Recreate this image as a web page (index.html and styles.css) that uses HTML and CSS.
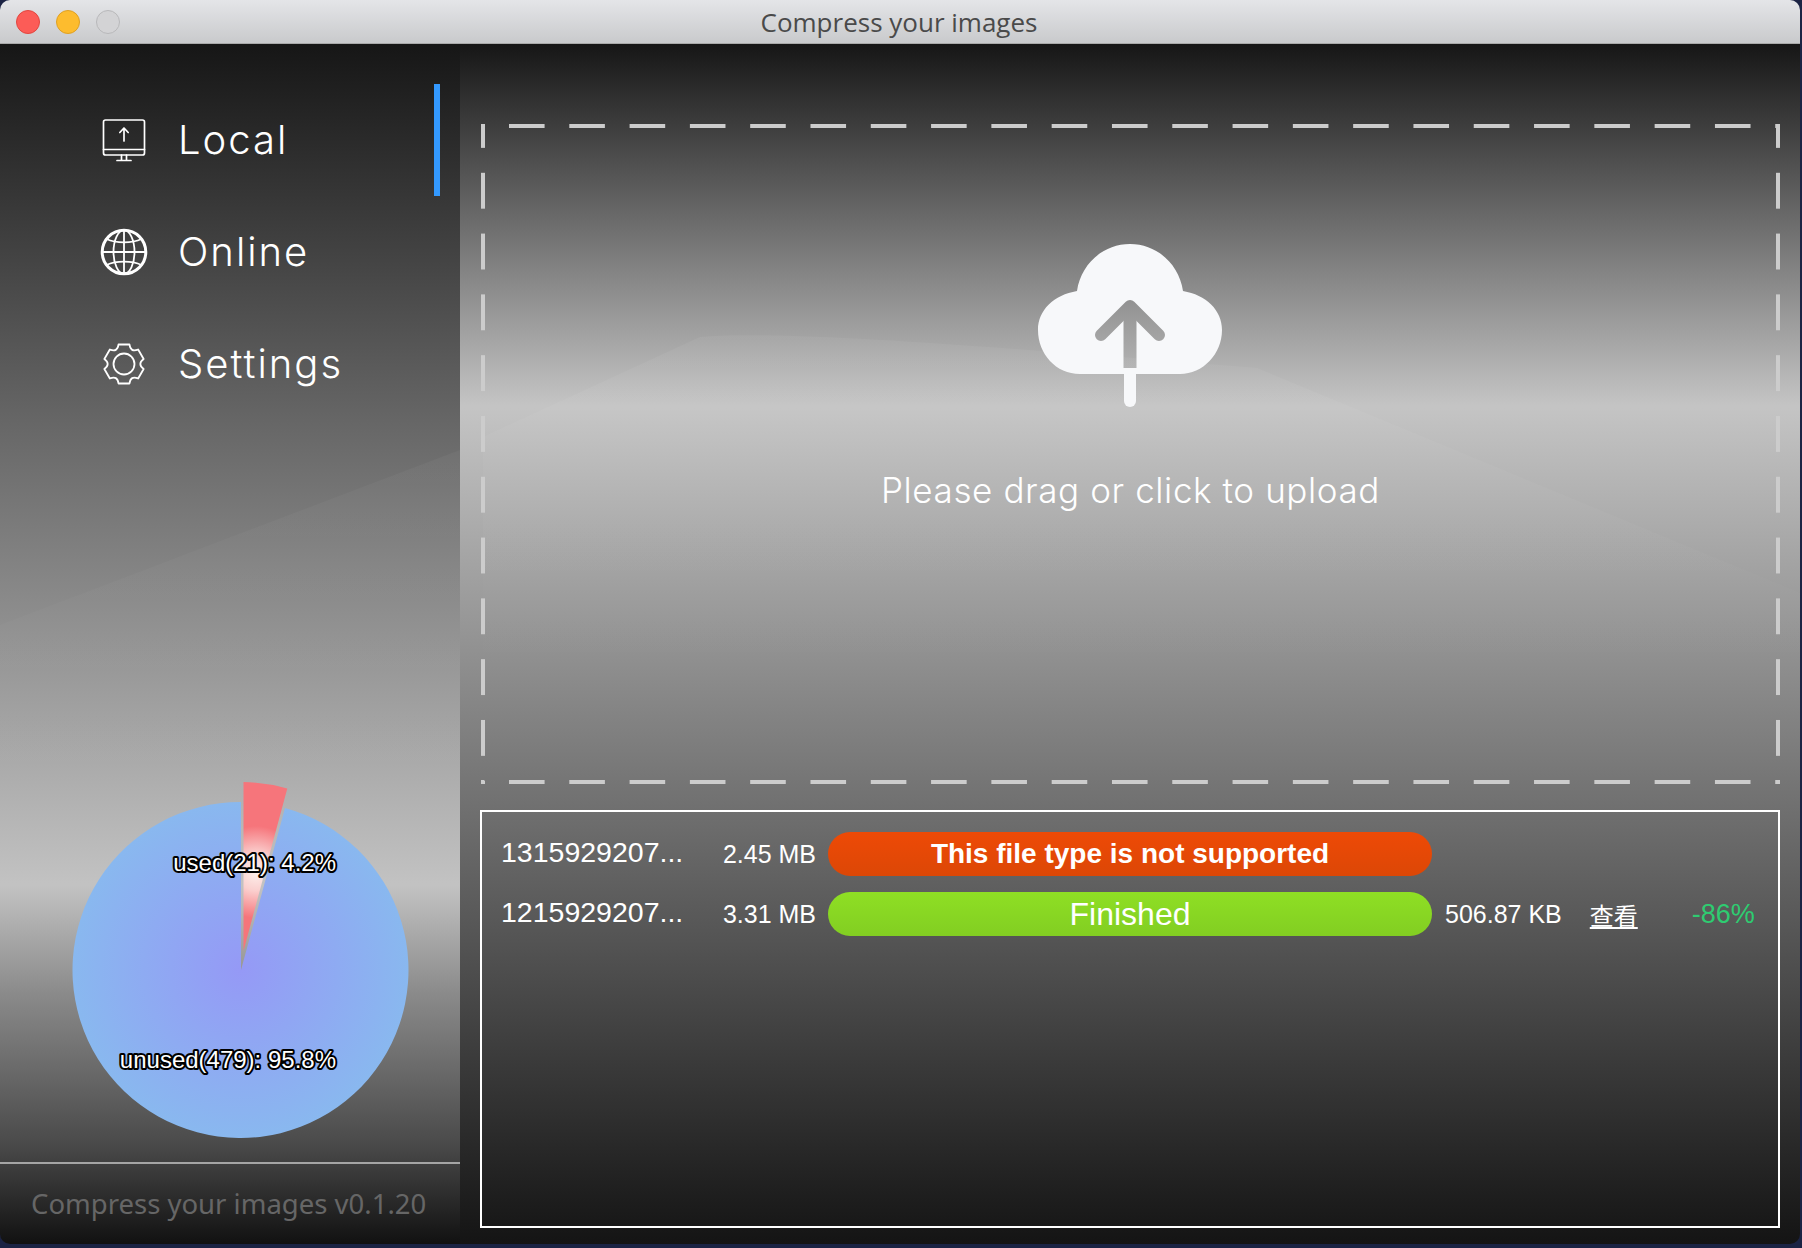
FILE: index.html
```html
<!DOCTYPE html>
<html lang="en">
<head>
    <meta charset="UTF-8">
    <title>Compress your images</title>
    <link rel="stylesheet" href="styles.css">
</head>
<body>
    <div class="window">
        <div class="titlebar">
            <div class="lights">
                <span class="light red"></span>
                <span class="light yellow"></span>
                <span class="light grey"></span>
            </div>
            <div class="title">Compress your images</div>
        </div>
        <div class="content">
            <div class="sidebar">
                <svg class="hills" viewBox="0 0 460 1200" preserveAspectRatio="none">
                    <defs>
                        <linearGradient id="hillside" x1="0" y1="0" x2="0" y2="1">
                            <stop offset="0" stop-color="#fff" stop-opacity="0.035"/>
                            <stop offset="1" stop-color="#fff" stop-opacity="0"/>
                        </linearGradient>
                    </defs>
                    <polygon points="0,581 460,406 460,780 0,780" fill="url(#hillside)"/>
                </svg>
                <ul class="nav">
                    <li class="nav-item active">
                        <svg class="nav-icon" viewBox="0 0 48 48">
                            <g fill="none" stroke="#fff" stroke-width="1.7" stroke-linecap="round" stroke-linejoin="round">
                                <rect x="3.5" y="4" width="41" height="35" rx="2"/>
                                <path d="M3.5 33.500H44.500M21.500 39V44.500M26.500 39V44.500M17 44.500H31"/>
                                <path d="M24 25V12M19.800 16.500L24 12L28.200 16.500"/>
                            </g>
                        </svg>
                        <span>Local</span>
                    </li>
                    <li class="nav-item">
                        <svg class="nav-icon" viewBox="0 0 48 48">
                            <g fill="none" stroke="#fff" stroke-linecap="round">
                                <circle cx="24" cy="24" r="21.800" stroke-width="3"/>
                                <g stroke-width="1.800">
                                    <ellipse cx="24" cy="24" rx="10.500" ry="21.800"/>
                                    <path d="M24 2.200V45.800M2.200 24H45.800"/>
                                    <path d="M6.500 11C16 15.500 32 15.500 41.500 11M6.500 37C16 32.500 32 32.500 41.500 37"/>
                                </g>
                            </g>
                        </svg>
                        <span>Online</span>
                    </li>
                    <li class="nav-item">
                        <svg class="nav-icon" viewBox="-24 -24 48 48">
                            <g fill="none" stroke="#fff" stroke-width="1.800" stroke-linejoin="round">
                                <path d="M-5.500 -19.500L5.500 -19.500Q6.500 -11.300 14.140 -14.510L19.640 -4.990Q13 0 19.640 4.990L14.140 14.510Q6.500 11.300 5.500 19.500L-5.500 19.500Q-6.500 11.300 -14.140 14.510L-19.640 4.990Q-13 0 -19.640 -4.990L-14.140 -14.510Q-6.500 -11.300 -5.500 -19.500Z"/>
                                <circle cx="0" cy="0" r="10.500"/>
                            </g>
                        </svg>
                        <span>Settings</span>
                    </li>
                </ul>
                <div class="pie-wrap">
                    <svg class="pie" viewBox="-1 -8 460 390">
                        <defs>
                            <radialGradient id="pieblue" gradientUnits="userSpaceOnUse" cx="240" cy="190" r="168">
                                <stop offset="0" stop-color="#9599f6"/>
                                <stop offset="1" stop-color="#89b8ef"/>
                            </radialGradient>
                            <radialGradient id="piered" gradientUnits="userSpaceOnUse" cx="255" cy="92" r="46">
                                <stop offset="0" stop-color="#fdf0ec"/>
                                <stop offset="0.4" stop-color="#fad0cf"/>
                                <stop offset="1" stop-color="#f6757b"/>
                            </radialGradient>
                        </defs>
                        <path d="M240 190L284 28A168 168 0 1 1 240 22Z" fill="url(#pieblue)"/>
                        <path d="M242.500 171L242.500 2A168 168 0 0 1 286.300 8.500Z" fill="url(#piered)"/>
                        <text class="pie-label" x="335" y="91" text-anchor="end">used(21): 4.2%</text>
                        <text class="pie-label" x="335" y="288" text-anchor="end">unused(479): 95.8%</text>
                    </svg>
                </div>
                <div class="version">Compress your images v0.1.20</div>
            </div>
            <div class="main">
                <svg class="hills" viewBox="0 0 1340 1200" preserveAspectRatio="none">
                    <defs>
                        <linearGradient id="hillmain" x1="0" y1="0" x2="0" y2="1">
                            <stop offset="0" stop-color="#fff" stop-opacity="0.05"/>
                            <stop offset="1" stop-color="#fff" stop-opacity="0"/>
                        </linearGradient>
                    </defs>
                    <path d="M23 393L240 293C320 285 560 305 797 324L1340 549L1340 640L23 640Z" fill="url(#hillmain)"/>
                </svg>
                <div class="dropzone">
                    <svg class="cloud" viewBox="0 0 185 163">
                        <defs>
                            <mask id="arrowcut">
                                <rect width="185" height="163" fill="#fff"/>
                                <path d="M63 91L92 62L121 91" fill="none" stroke="#000" stroke-width="12" stroke-linecap="round" stroke-linejoin="round"/>
                                <rect x="85.500" y="62" width="13" height="62" fill="#000"/>
                            </mask>
                        </defs>
                        <path d="M39 47C43 20 65 0 92 0C119 0 141 20 145 47C168 51 184 66 184 86C184 110 165 130 142 130L42 130C18 130 0 110 0 86C0 66 16 51 39 47Z" fill="#f7f8fa" mask="url(#arrowcut)"/>
                        <path d="M86 124H98V157A6 6 0 0 1 86 157Z" fill="#f7f8fa"/>
                    </svg>
                    <div class="drop-text">Please drag or click to upload</div>
                </div>
                <div class="filelist">
                    <div class="file-row">
                        <div class="file-name">1315929207...</div>
                        <div class="file-size">2.45 MB</div>
                        <div class="file-status error">This file type is not supported</div>
                    </div>
                    <div class="file-row">
                        <div class="file-name">1215929207...</div>
                        <div class="file-size">3.31 MB</div>
                        <div class="file-status done">Finished</div>
                        <div class="file-new">506.87 KB</div>
                        <a class="file-link" href="javascript:;">查看</a>
                        <div class="file-rate">-86%</div>
                    </div>
                </div>
            </div>
        </div>
    </div>
</body>
</html>
```

FILE: styles.css
```css
*{
    margin: 0px;
    padding: 0px;
    box-sizing: border-box;
}
body{
    width: 1802px;
    height: 1248px;
    overflow: hidden;
    background: #1b2344;
    font-family: "Liberation Sans", "Noto Sans CJK SC", sans-serif;
}
.window{
    width: 1800px;
    height: 1244px;
    border-radius: 10px;
    overflow: hidden;
    display: flex;
    flex-direction: column;
}

/* title bar */
.titlebar{
    height: 44px;
    flex: none;
    display: flex;
    align-items: center;
    position: relative;
    background: linear-gradient(#e4e5e8, #c9cacc);
    border-bottom: 1px solid #a9a9a9;
}
.lights{
    display: flex;
    gap: 16px;
    padding-left: 16px;
}
.light{
    width: 24px;
    height: 24px;
    border-radius: 50%;
}
.red{
    background: #fc5c57;
    border: 1px solid #e2463f;
}
.yellow{
    background: #fdbc2e;
    border: 1px solid #dfa023;
}
.grey{
    background: #d3d3d5;
    border: 1px solid #b8b8ba;
}
.title{
    position: absolute;
    left: 0;
    right: 2px;
    top: 6px;
    text-align: center;
    font-family: "Open Sans", sans-serif;
    font-size: 26px;
    line-height: 32px;
    color: #4a4a4a;
}

.content{
    flex: 1;
    display: flex;
    min-height: 0;
}
.hills{
    position: absolute;
    left: 0;
    top: 0;
    width: 100%;
    height: 100%;
}

/* left column */
.sidebar{
    width: 460px;
    flex: none;
    position: relative;
    display: flex;
    flex-direction: column;
    background: linear-gradient(#161616 0, #666 376px, #c2c2c2 839px, #c2c2c2 842px, #8a8a8a 950px, #4a4a4a 1100px, #111 1200px);
}
.nav{
    list-style-type: none;
    padding-top: 40px;
    position: relative;
}
.nav-item{
    height: 112px;
    display: flex;
    align-items: center;
    padding-left: 100px;
    color: #fff;
    font-family: Inter, sans-serif;
    font-weight: 300;
    font-size: 40px;
    letter-spacing: 2px;
}
.nav-item span{
    margin-bottom: 2px;
}
.nav-item.active{
    position: relative;
}
.nav-item.active::after{
    content: "";
    position: absolute;
    left: 434px;
    top: 0;
    width: 6px;
    height: 112px;
    background: #3399ff;
}
.nav-icon{
    width: 48px;
    height: 48px;
    margin-right: 30px;
}
.pie-wrap{
    margin-top: auto;
    position: relative;
}
.pie{
    display: block;
    width: 460px;
    height: 390px;
}
.pie-label{
    font-family: "Liberation Sans", sans-serif;
    font-size: 24px;
    fill: #fff;
    stroke: #000;
    stroke-width: 4px;
    paint-order: stroke;
    stroke-linejoin: round;
}
.version{
    height: 82px;
    position: relative;
    border-top: 2px solid #a5a5a5;
    padding: 20px 0 0 31px;
    font-family: "Noto Sans", sans-serif;
    font-size: 27.500px;
    line-height: 40px;
    color: #666;
}

/* right column */
.main{
    flex: 1;
    position: relative;
    display: flex;
    flex-direction: column;
    gap: 26px;
    padding: 80px 20px 16px 20px;
    background: linear-gradient(#161616 0, #c4c4c4 361px, #c4c4c4 364px, #141414 1200px);
}
.dropzone{
    position: relative;
    height: 660px;
    margin-left: 1px;
    flex: none;
    display: flex;
    flex-direction: column;
    align-items: center;
    padding-top: 120px;
    background-image:
        linear-gradient(to right, #ccc 36px, transparent 36px),
        linear-gradient(to right, #ccc 36px, transparent 36px),
        linear-gradient(to bottom, #ccc 36px, transparent 36px),
        linear-gradient(to bottom, #ccc 36px, transparent 36px);
    background-size: 60.300px 4px, 60.300px 4px, 4px 60.800px, 4px 60.800px;
    background-position: 28px 0, 28px 100%, 0 -12px, 100% -12px;
    background-repeat: repeat-x, repeat-x, repeat-y, repeat-y;
}
.cloud{
    width: 185px;
    height: 163px;
    flex: none;
}
.drop-text{
    margin-top: 61px;
    font-family: Inter, sans-serif;
    font-weight: 300;
    font-size: 35px;
    line-height: 44px;
    letter-spacing: 0.6px;
    color: #fff;
}
.filelist{
    flex: 1;
    border: 2px solid #fff;
    padding: 20px 20px 0 19px;
    display: flex;
    flex-direction: column;
    gap: 16px;
}
.file-row{
    display: flex;
    align-items: center;
    height: 44px;
    color: #fff;
    font-size: 25px;
}
.file-name{
    width: 190px;
    font-size: 28.500px;
    margin-bottom: 4px;
    white-space: nowrap;
}
.file-size{
    width: 125px;
    text-align: right;
    white-space: nowrap;
}
.file-status{
    width: 604px;
    height: 44px;
    margin-left: 12px;
    border-radius: 22px;
    text-align: center;
    line-height: 44px;
}
.error{
    background: linear-gradient(#ee4a06, #dc4706);
    font-size: 28px;
    font-weight: bold;
}
.done{
    background: linear-gradient(#8fdf24, #82ce22);
    font-size: 32px;
}
.file-new{
    margin-left: 13px;
    white-space: nowrap;
}
.file-link{
    margin-left: 28px;
    color: #fff;
    font-size: 24px;
}
.file-rate{
    margin-left: 54px;
    color: #2ecc71;
    font-size: 27px;
}
```
